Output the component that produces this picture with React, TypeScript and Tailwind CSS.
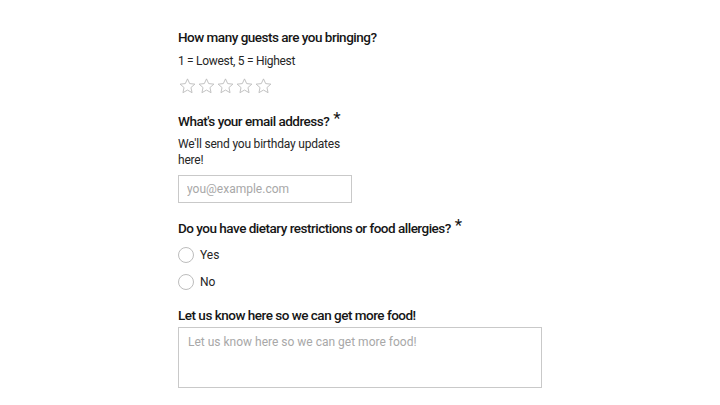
import React from "react";

function Star() {
  return (
    <svg width="19" height="18" viewBox="0 0 24 24" fill="none" stroke="#b5b5b5" strokeWidth="1.1" strokeLinejoin="round">
      <path d="M12 2.5l2.9 6.3 6.9.7-5.2 4.6 1.5 6.8L12 17.4l-6.1 3.5 1.5-6.8-5.2-4.6 6.9-.7z" />
    </svg>
  );
}

function Label({ children, required }: { children: React.ReactNode; required?: boolean }) {
  return (
    <div className="flex items-start text-[13.5px] font-medium leading-5 tracking-[-0.5px] text-[#161616]">
      <span>{children}</span>
      {required && <span className="ml-[4px] -mt-[3px] text-[17px] font-normal">*</span>}
    </div>
  );
}

export default function App() {
  return (
    <div className="min-h-[405px] bg-white" style={{ fontFamily: 'Roboto, "Noto Sans", sans-serif' }}>
      <div className="ml-[178px] flex w-[364px] flex-col pt-[27px]">
        <Label>How many guests are you bringing?</Label>
        <p className="mt-[4px] text-[12px] leading-5 tracking-[-0.3px] text-[#262626]">1 = Lowest, 5 = Highest</p>
        <div className="mt-[6px] flex">
          {[0, 1, 2, 3, 4].map((i) => (
            <Star key={i} />
          ))}
        </div>

        <div className="mt-[16px]">
          <Label required>What's your email address?</Label>
        </div>
        <p className="mt-[5px] w-[170px] text-[12px] leading-4 tracking-[-0.2px] text-[#262626]">
          We'll send you birthday updates here!
        </p>
        <input
          placeholder="you@example.com"
          className="mt-[7px] box-border h-[28px] w-[174px] border border-[#c9c9c9] px-[8px] text-[12px] outline-none placeholder:text-[#a8a8a8]"
        />

        <div className="mt-[15px]">
          <Label required>Do you have dietary restrictions or food allergies?</Label>
        </div>
        <div className="mt-[9px] flex flex-col gap-[11px]">
          {["Yes", "No"].map((o) => (
            <label key={o} className="flex h-[16px] items-center gap-[6px] text-[12px] leading-4 text-[#262626]">
              <span className="h-[16px] w-[16px] rounded-full border border-[#bdbdbd]" />
              {o}
            </label>
          ))}
        </div>

        <div className="mt-[15px]">
          <Label>Let us know here so we can get more food!</Label>
        </div>
        <textarea
          placeholder="Let us know here so we can get more food!"
          className="mt-[2px] box-border h-[61px] w-[364px] resize-none border border-[#c9c9c9] px-[9px] py-[5px] text-[12px] outline-none placeholder:text-[#a8a8a8]"
        />
      </div>
    </div>
  );
}
